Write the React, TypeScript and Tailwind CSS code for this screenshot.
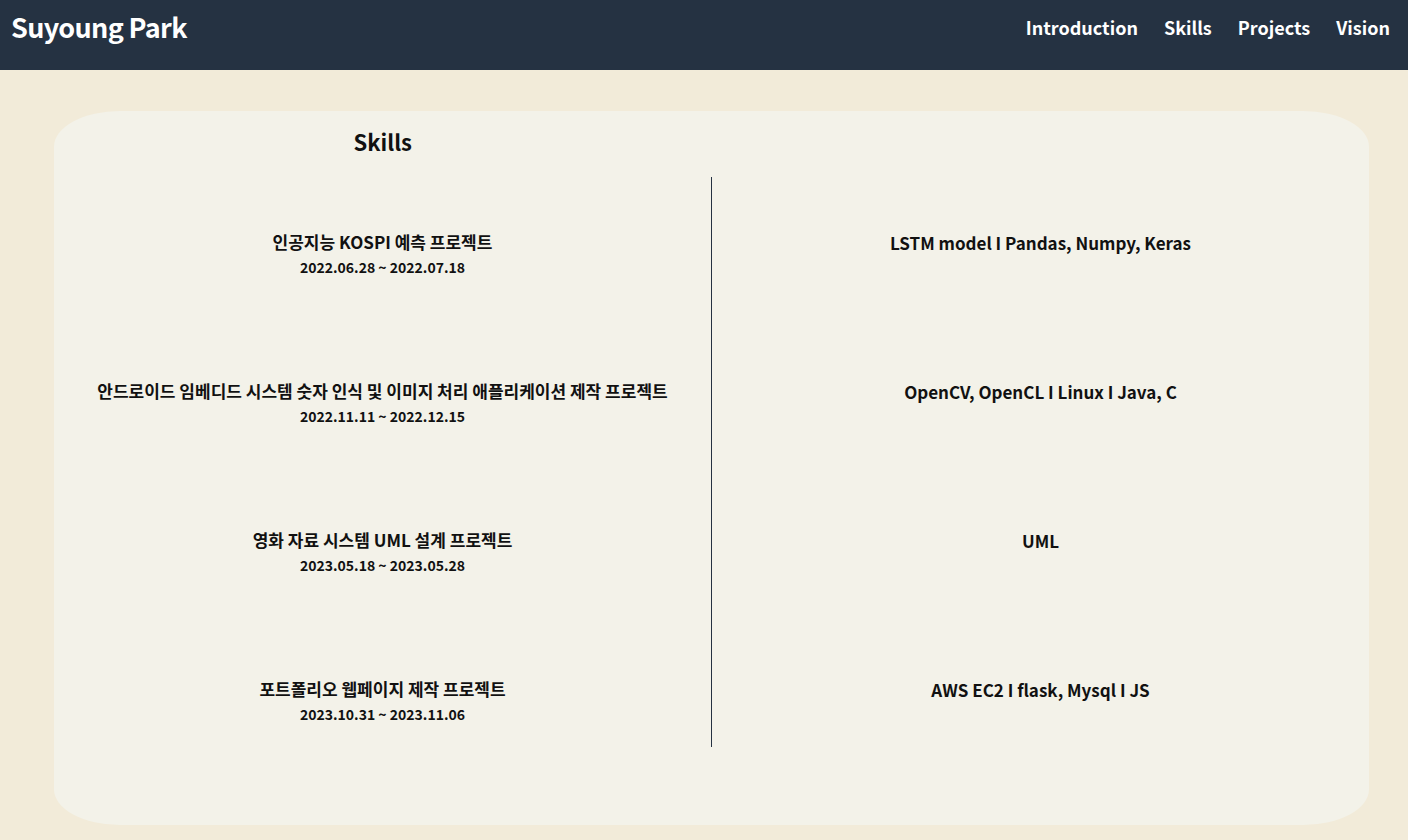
import React from 'react'

const projects = [
  { title: '인공지능 KOSPI 예측 프로젝트', date: '2022.06.28 ~ 2022.07.18', stack: 'LSTM model I Pandas, Numpy, Keras' },
  {
    title: '안드로이드 임베디드 시스템 숫자 인식 및 이미지 처리 애플리케이션 제작 프로젝트',
    date: '2022.11.11 ~ 2022.12.15',
    stack: 'OpenCV, OpenCL I Linux I Java, C',
  },
  { title: '영화 자료 시스템 UML 설계 프로젝트', date: '2023.05.18 ~ 2023.05.28', stack: 'UML' },
  { title: '포트폴리오 웹페이지 제작 프로젝트', date: '2023.10.31 ~ 2023.11.06', stack: 'AWS EC2 I flask, Mysql I JS' },
]

const font = "font-['Noto_Sans_CJK_KR','Noto_Sans',sans-serif]"

export default function App() {
  return (
    <div className={`min-h-screen bg-[#f2ebd9] ${font}`}>
      <header className="h-[70px] bg-[#253242] flex items-center justify-between pl-[11px] pr-[18px] pb-[15px] text-white">
        <h1 className="text-[27px] font-bold tracking-tight">Suyoung Park</h1>
        <nav className="flex items-center gap-[26px] text-[18px] font-bold">
          <a href="#intro">Introduction</a>
          <a href="#skills">Skills</a>
          <a href="#projects">Projects</a>
          <a href="#vision">Vision</a>
        </nav>
      </header>

      <main className="pt-[41px] pb-[15px] pl-[54px] pr-[39px]">
        <section id="skills" className="bg-[#f3f2e9] rounded-[5%] text-[#111]">
          <div className="flex h-[66px]">
            <h2 className="w-1/2 text-center text-[22px] font-bold pt-[14px]">Skills</h2>
          </div>

          <div className="flex pb-[49px]">
            <div className="flex-1 pt-[3px]">
              {projects.map((p) => (
                <div key={p.title} className="h-[149px] flex flex-col items-center justify-center">
                  <p className="text-[17px] font-bold leading-[26px]">{p.title}</p>
                  <p className="text-[14px] font-bold leading-[25px]">{p.date}</p>
                </div>
              ))}
            </div>
            <div className="w-px h-[570px] bg-[#253242]" />
            <div className="flex-1 pt-[3px]">
              {projects.map((p) => (
                <div key={p.stack} className="h-[149px] flex items-center justify-center pb-[24px]">
                  <p className="text-[17px] font-bold leading-[26px]">{p.stack}</p>
                </div>
              ))}
            </div>
          </div>
        </section>
      </main>
    </div>
  )
}
